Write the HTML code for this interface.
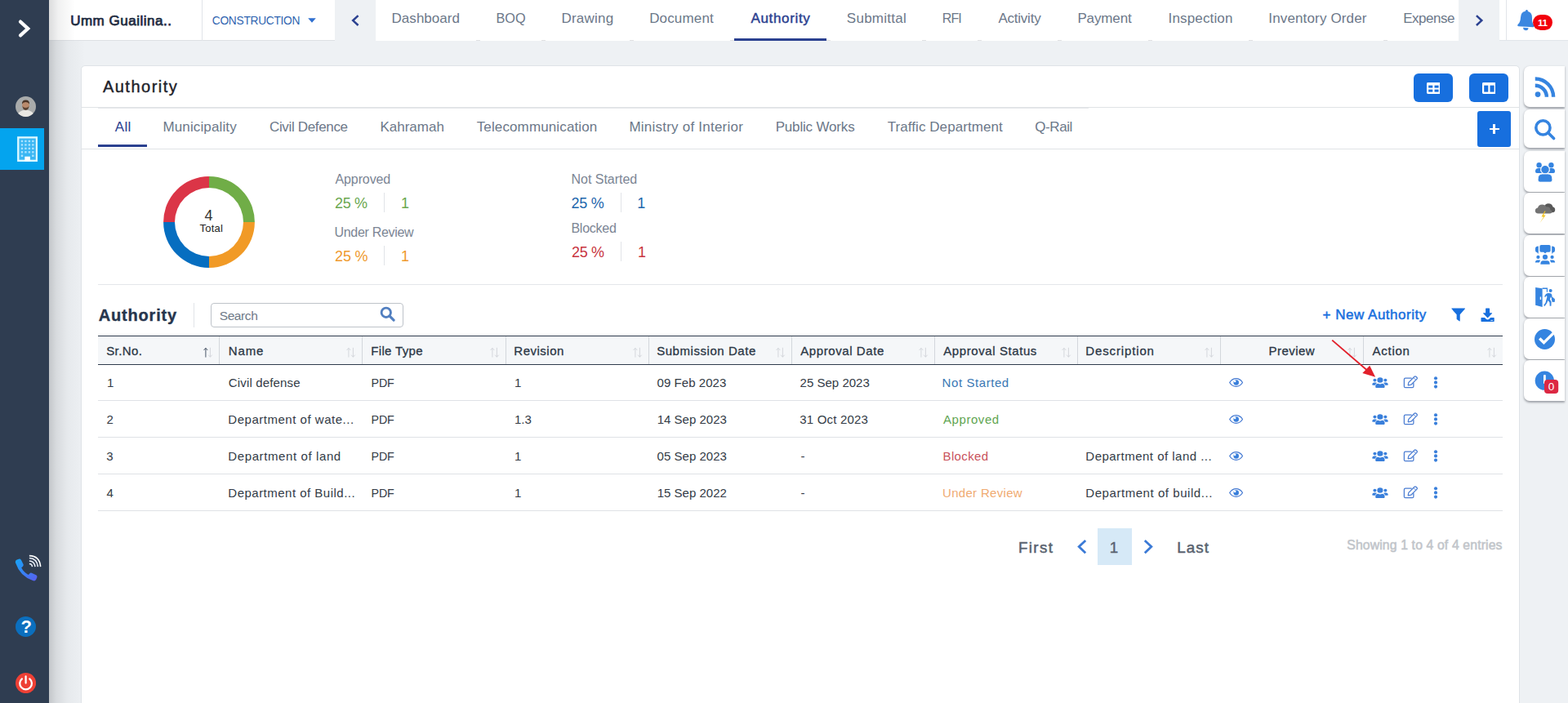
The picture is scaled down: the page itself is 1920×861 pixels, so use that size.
<!DOCTYPE html>
<html lang="en">
<head>
<meta charset="utf-8">
<title>Authority</title>
<style>
*{box-sizing:border-box;margin:0;padding:0}
html,body{width:1920px;height:861px;overflow:hidden}
body{background:#eef1f4;font-family:"Liberation Sans",sans-serif;color:#2b3443;position:relative}
.t{position:absolute;white-space:nowrap}
.a,svg{position:absolute}
.box{position:absolute}
</style>
</head>
<body>
<div class="box" style="left:60px;top:0px;width:44px;height:861px;background:linear-gradient(to right,rgba(40,45,50,.22),rgba(50,55,60,.12) 20%,rgba(60,65,70,.045) 52%,rgba(70,75,80,0) 100%);"></div>
<div id="topbar">
<div class="box" style="left:60px;top:0px;width:350px;height:50px;background:#fff;border-bottom:1px solid #dde0e4;"></div>
<div class="box" style="left:60px;top:0px;width:32px;height:50px;background:linear-gradient(to right,rgba(40,45,50,.17),rgba(50,55,60,.07) 35%,rgba(70,75,80,0) 100%);"></div>
<div class="box" style="left:247px;top:0px;width:1px;height:50px;background:#e1e4e9;"></div>
<div class="t" style="left:86.13px;top:15.00px;font-size:17px;line-height:22px;color:#1f2d42;letter-spacing:0.508px;-webkit-text-stroke:0.75px #1f2d42;">Umm Guailina..</div>
<div class="t" style="left:259.84px;top:17.00px;font-size:13.75px;line-height:18px;color:#2f64b0;letter-spacing:-0.290px;">CONSTRUCTION</div>
<svg style="left:376px;top:21px" width="12" height="8" viewBox="0 0 12 8"><path d="M1.2 1.2 H10.8 L6 6.8Z" fill="#2f6fd0"/></svg>
<svg style="left:428px;top:16px" width="14" height="18" viewBox="0 0 14 18"><path d="M10.6 3.2 L4.2 9.1 L10.6 15" fill="none" stroke="#2b4190" stroke-width="2.5"/></svg>
<div class="box" style="left:460px;top:0px;width:1326px;height:50px;background:#fff;"></div>
<div id="nav">
<div class="t" style="left:479.57px;top:12.00px;font-size:17px;line-height:22px;color:#6c7889;letter-spacing:0.028px;">Dashboard</div>
<div class="t" style="left:607.52px;top:12.00px;font-size:16.25px;line-height:21px;color:#6c7889;">BOQ</div>
<div class="t" style="left:687.38px;top:12.00px;font-size:17px;line-height:22px;color:#6c7889;letter-spacing:0.230px;">Drawing</div>
<div class="t" style="left:795.13px;top:12.00px;font-size:17px;line-height:22px;color:#6c7889;letter-spacing:0.159px;">Document</div>
<div class="t" style="left:919.48px;top:12.00px;font-size:17px;line-height:22px;color:#2b4190;letter-spacing:0.652px;-webkit-text-stroke:0.45px #2b4190;">Authority</div>
<div class="t" style="left:1036.82px;top:12.00px;font-size:17px;line-height:22px;color:#6c7889;letter-spacing:0.261px;">Submittal</div>
<div class="t" style="left:1153.83px;top:12.00px;font-size:16.0px;line-height:21px;color:#6c7889;letter-spacing:-0.975px;">RFI</div>
<div class="t" style="left:1222.39px;top:12.00px;font-size:17px;line-height:22px;color:#6c7889;letter-spacing:-0.220px;">Activity</div>
<div class="t" style="left:1319.38px;top:12.00px;font-size:17px;line-height:22px;color:#6c7889;letter-spacing:-0.124px;">Payment</div>
<div class="t" style="left:1430.58px;top:12.00px;font-size:17px;line-height:22px;color:#6c7889;letter-spacing:0.145px;">Inspection</div>
<div class="t" style="left:1553.26px;top:12.00px;font-size:17px;line-height:22px;color:#6c7889;letter-spacing:0.152px;">Inventory Order</div>
<div class="t" style="left:1718.22px;top:12.00px;font-size:17px;line-height:22px;color:#6c7889;letter-spacing:-0.470px;">Expense</div>
</div>
<div class="box" style="left:583px;top:49px;width:5px;height:1px;background:#e0e1e3;"></div>
<div class="box" style="left:663px;top:49px;width:5px;height:1px;background:#e0e1e3;"></div>
<div class="box" style="left:771px;top:49px;width:5px;height:1px;background:#e0e1e3;"></div>
<div class="box" style="left:894px;top:49px;width:5px;height:1px;background:#e0e1e3;"></div>
<div class="box" style="left:1012px;top:49px;width:5px;height:1px;background:#e0e1e3;"></div>
<div class="box" style="left:1129px;top:49px;width:5px;height:1px;background:#e0e1e3;"></div>
<div class="box" style="left:1197px;top:49px;width:5px;height:1px;background:#e0e1e3;"></div>
<div class="box" style="left:1295px;top:49px;width:5px;height:1px;background:#e0e1e3;"></div>
<div class="box" style="left:1406px;top:49px;width:5px;height:1px;background:#e0e1e3;"></div>
<div class="box" style="left:1529px;top:49px;width:5px;height:1px;background:#e0e1e3;"></div>
<div class="box" style="left:1694px;top:49px;width:5px;height:1px;background:#e0e1e3;"></div>
<div class="box" style="left:899px;top:47px;width:113px;height:3px;background:#2b4190;"></div>
<svg style="left:1804px;top:16px" width="14" height="18" viewBox="0 0 14 18"><path d="M3.9 3.2 L10.3 9.1 L3.9 15" fill="none" stroke="#2b4190" stroke-width="2.5"/></svg>
<div class="box" style="left:1836px;top:0px;width:84px;height:50px;background:#fff;border-bottom:1px solid #e1e5ea;"></div>
<div class="box" style="left:1844px;top:0px;width:1px;height:49px;background:#e1e4e9;"></div>
<svg style="left:1857px;top:11.4px" width="22.6" height="27" viewBox="0 0 22 27"><g transform="rotate(3 11 24)"><path d="M11 1 Q12.6 1 12.6 2.8 Q18 4 18 10.5 Q18 16.5 20.6 19 Q21.6 20 21.2 21 Q20.9 21.8 19.8 21.8 H2.2 Q1.1 21.8 0.8 21 Q0.4 20 1.4 19 Q4 16.5 4 10.5 Q4 4 9.4 2.8 Q9.4 1 11 1Z" fill="#3b87e0"/><path d="M7.8 23 H14.2 Q14.2 26.2 11 26.2 Q7.8 26.2 7.8 23Z" fill="#3b87e0"/></g></svg>
<div class="box" style="left:1877.3px;top:18px;width:24px;height:19px;border-radius:9.5px;background:#f2000c"></div>
<div class="t" style="left:1883.00px;top:20.00px;font-size:11.75px;line-height:15px;color:#fff;font-weight:700;letter-spacing:-0.486px;">11</div>
</div>
<div id="side">
<div class="box" style="left:0px;top:0px;width:60px;height:861px;background:#2f3d51;"></div>
<svg style="left:20px;top:22px" width="20" height="26" viewBox="0 0 20 26"><path d="M5 4.6 L14.2 13 L5 21.4" fill="none" stroke="#fff" stroke-width="4.2" stroke-linecap="round" stroke-linejoin="miter"/></svg>
<svg style="left:19px;top:117.5px" width="25" height="25" viewBox="0 0 26 26"><defs><clipPath id="avc"><circle cx="13" cy="13" r="13"/></clipPath></defs><circle cx="13" cy="13" r="13" fill="#a9abab"/><g clip-path="url(#avc)"><ellipse cx="13" cy="25.5" rx="11" ry="8" fill="#e9e7e3"/><ellipse cx="13" cy="11.5" rx="4.6" ry="5.6" fill="#b98a6c"/><path d="M8.2 10 Q8 4.6 13 4.6 Q18 4.6 17.8 10 Q16.5 7.4 13 7.4 Q9.5 7.4 8.2 10Z" fill="#4a3426"/><path d="M8.8 12.5 Q9.5 17.5 13 17.6 Q16.5 17.5 17.2 12.5 Q16 14.6 13 14.6 Q10 14.6 8.8 12.5Z" fill="#5a4232"/></g></svg>
<div class="box" style="left:0;top:157px;width:54px;height:51px;background:#04a4ee"></div>
<svg style="left:20.8px;top:166.8px" width="25.2" height="31.2" viewBox="0 0 26 32"><rect x="1.3" y="1.3" width="23.4" height="29.4" fill="#3ab6f3" stroke="#dcf8ff" stroke-width="2.4"/><g fill="#a8e2ff"><rect x="4.9" y="4.8" width="2.5" height="2.5"/><rect x="9.5" y="4.8" width="2.5" height="2.5"/><rect x="14.1" y="4.8" width="2.5" height="2.5"/><rect x="18.7" y="4.8" width="2.5" height="2.5"/><rect x="4.9" y="9.4" width="2.5" height="2.5"/><rect x="9.5" y="9.4" width="2.5" height="2.5"/><rect x="14.1" y="9.4" width="2.5" height="2.5"/><rect x="18.7" y="9.4" width="2.5" height="2.5"/><rect x="4.9" y="14" width="2.5" height="2.5"/><rect x="9.5" y="14" width="2.5" height="2.5"/><rect x="14.1" y="14" width="2.5" height="2.5"/><rect x="18.7" y="14" width="2.5" height="2.5"/><rect x="4.9" y="18.6" width="2.5" height="2.5"/><rect x="9.5" y="18.6" width="2.5" height="2.5"/><rect x="14.1" y="18.6" width="2.5" height="2.5"/><rect x="18.7" y="18.6" width="2.5" height="2.5"/><rect x="4.9" y="23.2" width="2.5" height="2.5"/><rect x="18.7" y="23.2" width="2.5" height="2.5"/></g><rect x="9.6" y="25.4" width="6.8" height="6" fill="#fff"/></svg>
<svg style="left:18px;top:679px" width="33" height="33" viewBox="0 0 36 36"><defs><linearGradient id="phg" x1="0" y1="0" x2="1" y2="1"><stop offset="0" stop-color="#16a6f8"/><stop offset="1" stop-color="#5a5df0"/></linearGradient></defs><path transform="translate(-2.47,-1.85) scale(1.19)" d="M3.2 11.5 Q2 8.8 4.6 7.6 L6.6 6.8 Q8.4 6.2 9.4 8 L11.6 12.4 Q12.4 14 11 15.2 L9.6 16.4 Q12 21.4 17.4 24.4 L18.8 23 Q20 21.8 21.6 22.6 L26 24.8 Q27.8 25.8 27 27.6 L26.2 29.6 Q25 32 22.4 31 Q8 26 3.2 11.5Z" fill="url(#phg)"/><g fill="none" stroke="#e8edf5" stroke-width="1.7"><path d="M19.5 12.5 Q23 12.5 23.5 16.5"/><path d="M19.5 8.7 Q26.3 9 27.3 16.5"/><path d="M19.5 5 Q29.8 5.4 31 16.5"/><path d="M19.5 1.8 Q33.4 2 34.5 16.5" stroke="#fff"/></g></svg>
<div class="box" style="left:18.9px;top:754.6px;width:25.2px;height:25.2px;border-radius:50%;background:#0b6fbe"></div>
<svg style="left:18.9px;top:823.8px" width="25.2" height="25.2" viewBox="0 0 26 26"><circle cx="13" cy="13" r="13" fill="#ee4035"/><path d="M8.2 7.6 A7.6 7.6 0 1 0 17.8 7.6" fill="none" stroke="#fff" stroke-width="2.3" stroke-linecap="round"/><path d="M13 4.6 V13" stroke="#fff" stroke-width="2.3" stroke-linecap="round"/></svg>
<div class="t" style="left:25.60px;top:753.00px;font-size:22px;line-height:29px;color:#fff;font-weight:700;">?</div>
</div>
<div id="card">
<div class="box" style="left:99px;top:80px;width:1762px;height:790px;background:#fff;border:1px solid #dfe3e7;border-radius:5px;"></div>
<div class="t" style="left:125.88px;top:93.00px;font-size:20px;line-height:26px;color:#1d2129;letter-spacing:1.499px;-webkit-text-stroke:0.4px #1d2129;">Authority</div>
<div class="box" style="left:1731px;top:90px;width:48px;height:35px;background:#176fde;border-radius:6px;"></div>
<div class="box" style="left:1799px;top:90px;width:48px;height:35px;background:#176fde;border-radius:6px;"></div>
<svg style="left:1746.7px;top:101px" width="16.8" height="14" viewBox="0 0 16.8 14"><rect width="16.8" height="14" rx="1.4" fill="#fff"/><rect x="2.2" y="3.6" width="5.1" height="3" fill="#176fde"/><rect x="9.5" y="3.6" width="5.1" height="3" fill="#176fde"/><rect x="2.2" y="8.6" width="5.1" height="3" fill="#176fde"/><rect x="9.5" y="8.6" width="5.1" height="3" fill="#176fde"/></svg>
<svg style="left:1814.6px;top:101px" width="16.8" height="14" viewBox="0 0 16.8 14"><rect width="16.8" height="14" rx="1.4" fill="#fff"/><rect x="2.2" y="3.6" width="5.1" height="8" fill="#176fde"/><rect x="9.5" y="3.6" width="5.1" height="8" fill="#176fde"/></svg>
<div class="box" style="left:100px;top:131px;width:1760px;height:1px;background:#e0e3e6;"></div>
<div class="box" style="left:120px;top:132px;width:1213px;height:1px;background:#e6e8eb;"></div>
<div id="tabs">
<div class="t" style="left:140.64px;top:145.00px;font-size:17px;line-height:22px;color:#2b4190;letter-spacing:0.439px;">All</div>
<div class="t" style="left:199.47px;top:145.00px;font-size:17px;line-height:22px;color:#6c7889;letter-spacing:0.128px;">Municipality</div>
<div class="t" style="left:330.01px;top:145.00px;font-size:17px;line-height:22px;color:#6c7889;letter-spacing:-0.342px;">Civil Defence</div>
<div class="t" style="left:465.47px;top:145.00px;font-size:17px;line-height:22px;color:#6c7889;letter-spacing:-0.007px;">Kahramah</div>
<div class="t" style="left:583.70px;top:145.00px;font-size:17px;line-height:22px;color:#6c7889;letter-spacing:0.131px;">Telecommunication</div>
<div class="t" style="left:770.47px;top:145.00px;font-size:17px;line-height:22px;color:#6c7889;letter-spacing:0.225px;">Ministry of Interior</div>
<div class="t" style="left:949.67px;top:145.00px;font-size:17px;line-height:22px;color:#6c7889;letter-spacing:-0.172px;">Public Works</div>
<div class="t" style="left:1086.71px;top:145.00px;font-size:17px;line-height:22px;color:#6c7889;letter-spacing:0.070px;">Traffic Department</div>
<div class="t" style="left:1267.34px;top:145.00px;font-size:17px;line-height:22px;color:#6c7889;letter-spacing:-0.443px;">Q-Rail</div>
</div>
<div class="box" style="left:120px;top:177px;width:60px;height:3px;background:#2b4190;"></div>
<div class="box" style="left:100px;top:182px;width:1760px;height:1px;background:#e0e3e6;"></div>
<div class="box" style="left:1809px;top:136px;width:41px;height:44px;background:#176fde;border-radius:3px;"></div>
<div class="box" style="left:1823.5px;top:157px;width:12px;height:2.4px;background:#fff;"></div>
<div class="box" style="left:1828.3px;top:152.2px;width:2.4px;height:12px;background:#fff;"></div>
<svg style="left:197.7px;top:213.5px" width="116" height="116" viewBox="-58 -58 116 116"><path d="M0,-55.9 A55.9,55.9 0 0 1 55.9,0 L42,0 A42,42 0 0 0 0,-42 Z" fill="#70ad47"/><path d="M55.9,0 A55.9,55.9 0 0 1 0,55.9 L0,42 A42,42 0 0 0 42,0 Z" fill="#f19a26"/><path d="M0,55.9 A55.9,55.9 0 0 1 -55.9,0 L-42,0 A42,42 0 0 0 0,42 Z" fill="#066ec0"/><path d="M-55.9,0 A55.9,55.9 0 0 1 0,-55.9 L0,-42 A42,42 0 0 0 -42,0 Z" fill="#db3547"/></svg>
<div class="t" style="left:250.49px;top:253.00px;font-size:18px;line-height:23px;color:#333;">4</div>
<div class="t" style="left:244.53px;top:271.00px;font-size:13px;line-height:17px;color:#222;letter-spacing:0.197px;">Total</div>
<div id="stats">
<div class="t" style="left:410.47px;top:209.00px;font-size:16px;line-height:21px;color:#7b8594;letter-spacing:-0.100px;">Approved</div>
<div class="t" style="left:410.07px;top:238.00px;font-size:18px;line-height:23px;color:#6aa84f;letter-spacing:-0.393px;">25 %</div>
<div class="box" style="left:470px;top:236px;width:1px;height:24px;background:#e1e4e8;"></div>
<div class="t" style="left:491.00px;top:238.00px;font-size:18px;line-height:23px;color:#6aa84f;">1</div>
<div class="t" style="left:409.44px;top:274.00px;font-size:16px;line-height:21px;color:#7b8594;letter-spacing:-0.296px;">Under Review</div>
<div class="t" style="left:410.08px;top:303.00px;font-size:18px;line-height:23px;color:#ef9a2e;letter-spacing:-0.209px;">25 %</div>
<div class="box" style="left:470px;top:301px;width:1px;height:24px;background:#e1e4e8;"></div>
<div class="t" style="left:491.00px;top:303.00px;font-size:18px;line-height:23px;color:#ef9a2e;">1</div>
<div class="t" style="left:699.47px;top:209.00px;font-size:16px;line-height:21px;color:#7b8594;letter-spacing:-0.015px;">Not Started</div>
<div class="t" style="left:699.39px;top:238.00px;font-size:18px;line-height:23px;color:#1e66ad;letter-spacing:-0.227px;">25 %</div>
<div class="box" style="left:760px;top:236px;width:1px;height:24px;background:#e1e4e8;"></div>
<div class="t" style="left:780.33px;top:238.00px;font-size:18px;line-height:23px;color:#1e66ad;">1</div>
<div class="t" style="left:699.47px;top:269.00px;font-size:16px;line-height:21px;color:#7b8594;letter-spacing:-0.268px;">Blocked</div>
<div class="t" style="left:699.91px;top:298.00px;font-size:18px;line-height:23px;color:#c8343e;letter-spacing:-0.283px;">25 %</div>
<div class="box" style="left:760px;top:296px;width:1px;height:24px;background:#e1e4e8;"></div>
<div class="t" style="left:781.00px;top:298.00px;font-size:18px;line-height:23px;color:#c8343e;">1</div>
</div>
<div class="box" style="left:120px;top:348px;width:1720px;height:1px;background:#e4e7ea;"></div>
<div class="t" style="left:120.66px;top:372.50px;font-size:20px;line-height:26px;color:#26354d;font-weight:700;letter-spacing:0.822px;-webkit-text-stroke:0.35px #26354d;">Authority</div>
<div class="box" style="left:237px;top:371px;width:1px;height:30px;background:#e1e4e8;"></div>
<div class="box" style="left:258px;top:371px;width:236px;height:30px;background:#fff;border:1px solid #bec3c9;border-radius:4px;"></div>
<div class="t" style="left:268.73px;top:377.30px;font-size:15.5px;line-height:20px;color:#6f7a88;letter-spacing:-0.415px;">Search</div>
<svg style="left:464.8px;top:375.2px" width="19" height="19" viewBox="0 0 20 20"><circle cx="8.2" cy="8.2" r="6" fill="none" stroke="#527fc0" stroke-width="3"/><path d="M12.8 12.8 L18 18" stroke="#527fc0" stroke-width="3.3" stroke-linecap="round"/></svg>
<svg style="left:1776.8px;top:377.4px" width="17.4" height="17.4" viewBox="0 0 17 17"><path d="M0.8 0.5 H16.2 Q17 0.5 16.5 1.3 L10.5 8 V15.5 Q10.5 16.6 9.6 16 L6.9 14 Q6.5 13.7 6.5 13.2 V8 L0.5 1.3 Q0 0.5 0.8 0.5Z" fill="#176fde"/></svg>
<svg style="left:1813.2px;top:377.4px" width="17.2" height="17.4" viewBox="0 0 18 18"><path d="M7 0.5 H11 Q11.6 0.5 11.6 1.1 V6.5 H14.3 Q15.3 6.5 14.6 7.3 L9.5 12.4 Q9 12.9 8.5 12.4 L3.4 7.3 Q2.7 6.5 3.7 6.5 H6.4 V1.1 Q6.4 0.5 7 0.5Z" fill="#176fde"/><path d="M0.5 13 Q0.5 12.4 1.1 12.4 H5.2 L7.2 14.3 Q9 15.8 10.8 14.3 L12.8 12.4 H16.9 Q17.5 12.4 17.5 13 V17 Q17.5 17.6 16.9 17.6 H1.1 Q0.5 17.6 0.5 17Z M13 15.6 H15.6 V16.4 H13Z" fill="#176fde" fill-rule="evenodd"/></svg>
<div class="t" style="left:1619.62px;top:375.00px;font-size:17px;line-height:22px;color:#176fde;letter-spacing:0.500px;-webkit-text-stroke:0.5px #176fde;">+ New Authority</div>
<div id="table">
<div class="box" style="left:120px;top:411px;width:1720px;height:36px;background:#f5f7f9;border-top:1px solid #2f3b4c;border-bottom:1px solid #2f3b4c;"></div>
<div class="t" style="left:130.16px;top:420.00px;font-size:15px;line-height:20px;color:#2c3746;letter-spacing:0.423px;-webkit-text-stroke:0.3px #2c3746;">Sr.No.</div>
<div class="box" style="left:268px;top:412px;width:1px;height:34px;background:#d3d7dc;"></div>
<svg style="left:247.6px;top:425px" width="14" height="14" viewBox="0 0 14 14"><path d="M3.9 12.6 V1.4 M1.6 3.9 L3.9 1.3 L6.2 3.9" fill="none" stroke="#3d4b5e" stroke-width=".95"/><path d="M9.4 0.8 V12.2 M7.1 9.7 L9.4 12.3 L11.7 9.7" fill="none" stroke="#d2d5da" stroke-width=".95"/></svg>
<div class="t" style="left:279.64px;top:420.00px;font-size:15px;line-height:20px;color:#2c3746;letter-spacing:0.923px;-webkit-text-stroke:0.3px #2c3746;">Name</div>
<div class="box" style="left:443px;top:412px;width:1px;height:34px;background:#d3d7dc;"></div>
<svg style="left:422.6px;top:425px" width="14" height="14" viewBox="0 0 14 14"><path d="M3.9 12.6 V1.4 M1.6 3.9 L3.9 1.3 L6.2 3.9" fill="none" stroke="#d2d5da" stroke-width=".95"/><path d="M9.4 0.8 V12.2 M7.1 9.7 L9.4 12.3 L11.7 9.7" fill="none" stroke="#d2d5da" stroke-width=".95"/></svg>
<div class="t" style="left:454.31px;top:420.00px;font-size:15px;line-height:20px;color:#2c3746;letter-spacing:0.329px;-webkit-text-stroke:0.3px #2c3746;">File Type</div>
<div class="box" style="left:619px;top:412px;width:1px;height:34px;background:#d3d7dc;"></div>
<svg style="left:598.6px;top:425px" width="14" height="14" viewBox="0 0 14 14"><path d="M3.9 12.6 V1.4 M1.6 3.9 L3.9 1.3 L6.2 3.9" fill="none" stroke="#d2d5da" stroke-width=".95"/><path d="M9.4 0.8 V12.2 M7.1 9.7 L9.4 12.3 L11.7 9.7" fill="none" stroke="#d2d5da" stroke-width=".95"/></svg>
<div class="t" style="left:629.31px;top:420.00px;font-size:15px;line-height:20px;color:#2c3746;letter-spacing:0.504px;-webkit-text-stroke:0.3px #2c3746;">Revision</div>
<div class="box" style="left:794px;top:412px;width:1px;height:34px;background:#d3d7dc;"></div>
<svg style="left:773.6px;top:425px" width="14" height="14" viewBox="0 0 14 14"><path d="M3.9 12.6 V1.4 M1.6 3.9 L3.9 1.3 L6.2 3.9" fill="none" stroke="#d2d5da" stroke-width=".95"/><path d="M9.4 0.8 V12.2 M7.1 9.7 L9.4 12.3 L11.7 9.7" fill="none" stroke="#d2d5da" stroke-width=".95"/></svg>
<div class="t" style="left:804.16px;top:420.00px;font-size:15px;line-height:20px;color:#2c3746;letter-spacing:0.552px;-webkit-text-stroke:0.3px #2c3746;">Submission Date</div>
<div class="box" style="left:969px;top:412px;width:1px;height:34px;background:#d3d7dc;"></div>
<svg style="left:948.6px;top:425px" width="14" height="14" viewBox="0 0 14 14"><path d="M3.9 12.6 V1.4 M1.6 3.9 L3.9 1.3 L6.2 3.9" fill="none" stroke="#d2d5da" stroke-width=".95"/><path d="M9.4 0.8 V12.2 M7.1 9.7 L9.4 12.3 L11.7 9.7" fill="none" stroke="#d2d5da" stroke-width=".95"/></svg>
<div class="t" style="left:980.24px;top:420.00px;font-size:15px;line-height:20px;color:#2c3746;letter-spacing:0.582px;-webkit-text-stroke:0.3px #2c3746;">Approval Date</div>
<div class="box" style="left:1144px;top:412px;width:1px;height:34px;background:#d3d7dc;"></div>
<svg style="left:1123.6px;top:425px" width="14" height="14" viewBox="0 0 14 14"><path d="M3.9 12.6 V1.4 M1.6 3.9 L3.9 1.3 L6.2 3.9" fill="none" stroke="#d2d5da" stroke-width=".95"/><path d="M9.4 0.8 V12.2 M7.1 9.7 L9.4 12.3 L11.7 9.7" fill="none" stroke="#d2d5da" stroke-width=".95"/></svg>
<div class="t" style="left:1155.24px;top:420.00px;font-size:15px;line-height:20px;color:#2c3746;letter-spacing:0.587px;-webkit-text-stroke:0.3px #2c3746;">Approval Status</div>
<div class="box" style="left:1319px;top:412px;width:1px;height:34px;background:#d3d7dc;"></div>
<svg style="left:1298.6px;top:425px" width="14" height="14" viewBox="0 0 14 14"><path d="M3.9 12.6 V1.4 M1.6 3.9 L3.9 1.3 L6.2 3.9" fill="none" stroke="#d2d5da" stroke-width=".95"/><path d="M9.4 0.8 V12.2 M7.1 9.7 L9.4 12.3 L11.7 9.7" fill="none" stroke="#d2d5da" stroke-width=".95"/></svg>
<div class="t" style="left:1329.31px;top:420.00px;font-size:15px;line-height:20px;color:#2c3746;letter-spacing:0.863px;-webkit-text-stroke:0.3px #2c3746;">Description</div>
<div class="box" style="left:1494px;top:412px;width:1px;height:34px;background:#d3d7dc;"></div>
<svg style="left:1473.6px;top:425px" width="14" height="14" viewBox="0 0 14 14"><path d="M3.9 12.6 V1.4 M1.6 3.9 L3.9 1.3 L6.2 3.9" fill="none" stroke="#d2d5da" stroke-width=".95"/><path d="M9.4 0.8 V12.2 M7.1 9.7 L9.4 12.3 L11.7 9.7" fill="none" stroke="#d2d5da" stroke-width=".95"/></svg>
<div class="t" style="left:1553.62px;top:420.00px;font-size:15px;line-height:20px;color:#2c3746;letter-spacing:0.447px;-webkit-text-stroke:0.3px #2c3746;">Preview</div>
<div class="box" style="left:1669px;top:412px;width:1px;height:34px;background:#d3d7dc;"></div>
<svg style="left:1648.6px;top:425px" width="14" height="14" viewBox="0 0 14 14"><path d="M3.9 12.6 V1.4 M1.6 3.9 L3.9 1.3 L6.2 3.9" fill="none" stroke="#d2d5da" stroke-width=".95"/><path d="M9.4 0.8 V12.2 M7.1 9.7 L9.4 12.3 L11.7 9.7" fill="none" stroke="#d2d5da" stroke-width=".95"/></svg>
<div class="t" style="left:1680.60px;top:420.00px;font-size:15px;line-height:20px;color:#2c3746;letter-spacing:0.736px;-webkit-text-stroke:0.3px #2c3746;">Action</div>
<svg style="left:1819.6px;top:425px" width="14" height="14" viewBox="0 0 14 14"><path d="M3.9 12.6 V1.4 M1.6 3.9 L3.9 1.3 L6.2 3.9" fill="none" stroke="#d2d5da" stroke-width=".95"/><path d="M9.4 0.8 V12.2 M7.1 9.7 L9.4 12.3 L11.7 9.7" fill="none" stroke="#d2d5da" stroke-width=".95"/></svg>
<div class="row">
<div class="t" style="left:130.92px;top:459.00px;font-size:15px;line-height:20px;color:#333b46;">1</div>
<div class="t" style="left:279.84px;top:459.00px;font-size:15px;line-height:20px;color:#333b46;letter-spacing:0.160px;">Civil defense</div>
<div class="t" style="left:454.46px;top:460.00px;font-size:14.25px;line-height:19px;color:#333b46;letter-spacing:-0.065px;">PDF</div>
<div class="t" style="left:629.92px;top:459.00px;font-size:15px;line-height:20px;color:#333b46;">1</div>
<div class="t" style="left:804.58px;top:459.00px;font-size:15px;line-height:20px;color:#333b46;letter-spacing:0.053px;">09 Feb 2023</div>
<div class="t" style="left:979.58px;top:459.00px;font-size:15px;line-height:20px;color:#333b46;letter-spacing:0.015px;">25 Sep 2023</div>
<div class="t" style="left:1153.58px;top:459.00px;font-size:15px;line-height:20px;color:#3a78b5;letter-spacing:0.576px;">Not Started</div>
<svg style="left:1504.8px;top:462.7px" width="17.2" height="11" viewBox="0 0 17.2 11"><path d="M0.7 5.5 C3 1.7 5.8 0.65 8.6 0.65 C11.4 0.65 14.2 1.7 16.5 5.5 C14.2 9.3 11.4 10.35 8.6 10.35 C5.8 10.35 3 9.3 0.7 5.5Z" fill="#fff" stroke="#4479d2" stroke-width="1.25"/><circle cx="8.7" cy="5.5" r="3.25" fill="#397fdb"/><circle cx="7.2" cy="4" r="1.25" fill="#fff"/></svg><svg style="left:1679.5px;top:461.7px" width="20" height="13.4" viewBox="0 0 21 15" preserveAspectRatio="none"><circle cx="3.6" cy="4" r="2.1" fill="#397fdb"/><circle cx="17.2" cy="4" r="2.1" fill="#397fdb"/><circle cx="10.4" cy="3.9" r="3.7" fill="#397fdb"/><path d="M0.3 10 Q0.3 7.2 3 7.2 H4.6 Q5.8 7.2 6.4 7.8 Q4.6 8.8 4.2 10.8 H1 Q0.3 10.8 0.3 10Z" fill="#397fdb"/><path d="M20.7 10 Q20.7 7.2 18 7.2 H16.4 Q15.2 7.2 14.6 7.8 Q16.4 8.8 16.8 10.8 H20 Q20.7 10.8 20.7 10Z" fill="#397fdb"/><path d="M4.4 13 Q4.4 8.8 8 8.8 Q10.4 10 12.8 8.8 Q16.4 8.8 16.4 13 Q16.4 14.8 14.9 14.8 H5.9 Q4.4 14.8 4.4 13Z" fill="#397fdb"/></svg><svg style="left:1718px;top:460.2px" width="18.4" height="16" viewBox="0 0 19 17"><path d="M10.6 3.4 H2.8 Q1.2 3.4 1.2 5 V14 Q1.2 15.6 2.8 15.6 H11.8 Q13.4 15.6 13.4 14 V10" fill="none" stroke="#4b7dd2" stroke-width="1.35" stroke-linecap="round"/><path d="M14.6 1.3 Q15.6 0.4 16.6 1.3 L17.7 2.4 Q18.6 3.4 17.7 4.4 L10.2 11.9 L6.9 12.5 Q6.3 12.6 6.4 12 L7 8.9Z" fill="none" stroke="#4b7dd2" stroke-width="1.35" stroke-linejoin="round"/><path d="M13.4 2.6 L16.4 5.6" stroke="#4b7dd2" stroke-width="1"/></svg><svg style="left:1755.2px;top:461.0px" width="6" height="14.8" viewBox="0 0 6 14.8"><circle cx="3" cy="2.2" r="2.05" fill="#397fdb"/><circle cx="3" cy="7.4" r="2.05" fill="#397fdb"/><circle cx="3" cy="12.6" r="2.05" fill="#397fdb"/></svg>
</div>
<div class="box" style="left:120px;top:490px;width:1720px;height:1px;background:#dfe2e6;"></div>
<div class="row">
<div class="t" style="left:130.58px;top:504.00px;font-size:15px;line-height:20px;color:#333b46;">2</div>
<div class="t" style="left:279.32px;top:504.00px;font-size:15px;line-height:20px;color:#333b46;letter-spacing:0.523px;">Department of wate...</div>
<div class="t" style="left:454.46px;top:505.00px;font-size:14.25px;line-height:19px;color:#333b46;letter-spacing:-0.065px;">PDF</div>
<div class="t" style="left:629.92px;top:504.00px;font-size:15px;line-height:20px;color:#333b46;letter-spacing:0.014px;">1.3</div>
<div class="t" style="left:804.67px;top:504.00px;font-size:15px;line-height:20px;color:#333b46;letter-spacing:0.020px;">14 Sep 2023</div>
<div class="t" style="left:979.34px;top:504.00px;font-size:15px;line-height:20px;color:#333b46;letter-spacing:0.189px;">31 Oct 2023</div>
<div class="t" style="left:1155.00px;top:504.00px;font-size:15px;line-height:20px;color:#5fa552;letter-spacing:0.566px;">Approved</div>
<svg style="left:1504.8px;top:507.7px" width="17.2" height="11" viewBox="0 0 17.2 11"><path d="M0.7 5.5 C3 1.7 5.8 0.65 8.6 0.65 C11.4 0.65 14.2 1.7 16.5 5.5 C14.2 9.3 11.4 10.35 8.6 10.35 C5.8 10.35 3 9.3 0.7 5.5Z" fill="#fff" stroke="#4479d2" stroke-width="1.25"/><circle cx="8.7" cy="5.5" r="3.25" fill="#397fdb"/><circle cx="7.2" cy="4" r="1.25" fill="#fff"/></svg><svg style="left:1679.5px;top:506.7px" width="20" height="13.4" viewBox="0 0 21 15" preserveAspectRatio="none"><circle cx="3.6" cy="4" r="2.1" fill="#397fdb"/><circle cx="17.2" cy="4" r="2.1" fill="#397fdb"/><circle cx="10.4" cy="3.9" r="3.7" fill="#397fdb"/><path d="M0.3 10 Q0.3 7.2 3 7.2 H4.6 Q5.8 7.2 6.4 7.8 Q4.6 8.8 4.2 10.8 H1 Q0.3 10.8 0.3 10Z" fill="#397fdb"/><path d="M20.7 10 Q20.7 7.2 18 7.2 H16.4 Q15.2 7.2 14.6 7.8 Q16.4 8.8 16.8 10.8 H20 Q20.7 10.8 20.7 10Z" fill="#397fdb"/><path d="M4.4 13 Q4.4 8.8 8 8.8 Q10.4 10 12.8 8.8 Q16.4 8.8 16.4 13 Q16.4 14.8 14.9 14.8 H5.9 Q4.4 14.8 4.4 13Z" fill="#397fdb"/></svg><svg style="left:1718px;top:505.2px" width="18.4" height="16" viewBox="0 0 19 17"><path d="M10.6 3.4 H2.8 Q1.2 3.4 1.2 5 V14 Q1.2 15.6 2.8 15.6 H11.8 Q13.4 15.6 13.4 14 V10" fill="none" stroke="#4b7dd2" stroke-width="1.35" stroke-linecap="round"/><path d="M14.6 1.3 Q15.6 0.4 16.6 1.3 L17.7 2.4 Q18.6 3.4 17.7 4.4 L10.2 11.9 L6.9 12.5 Q6.3 12.6 6.4 12 L7 8.9Z" fill="none" stroke="#4b7dd2" stroke-width="1.35" stroke-linejoin="round"/><path d="M13.4 2.6 L16.4 5.6" stroke="#4b7dd2" stroke-width="1"/></svg><svg style="left:1755.2px;top:506.0px" width="6" height="14.8" viewBox="0 0 6 14.8"><circle cx="3" cy="2.2" r="2.05" fill="#397fdb"/><circle cx="3" cy="7.4" r="2.05" fill="#397fdb"/><circle cx="3" cy="12.6" r="2.05" fill="#397fdb"/></svg>
</div>
<div class="box" style="left:120px;top:535px;width:1720px;height:1px;background:#dfe2e6;"></div>
<div class="row">
<div class="t" style="left:130.34px;top:549.00px;font-size:15px;line-height:20px;color:#333b46;">3</div>
<div class="t" style="left:279.32px;top:549.00px;font-size:15px;line-height:20px;color:#333b46;letter-spacing:0.607px;">Department of land</div>
<div class="t" style="left:454.46px;top:550.00px;font-size:14.25px;line-height:19px;color:#333b46;letter-spacing:-0.065px;">PDF</div>
<div class="t" style="left:629.92px;top:549.00px;font-size:15px;line-height:20px;color:#333b46;">1</div>
<div class="t" style="left:804.58px;top:549.00px;font-size:15px;line-height:20px;color:#333b46;letter-spacing:0.029px;">05 Sep 2023</div>
<div class="t" style="left:980.39px;top:549.00px;font-size:15px;line-height:20px;color:#333b46;">-</div>
<div class="t" style="left:1154.55px;top:549.00px;font-size:15px;line-height:20px;color:#c9525b;letter-spacing:0.364px;">Blocked</div>
<div class="t" style="left:1329.32px;top:549.00px;font-size:15px;line-height:20px;color:#333b46;letter-spacing:0.481px;">Department of land ...</div>
<svg style="left:1504.8px;top:552.6999999999999px" width="17.2" height="11" viewBox="0 0 17.2 11"><path d="M0.7 5.5 C3 1.7 5.8 0.65 8.6 0.65 C11.4 0.65 14.2 1.7 16.5 5.5 C14.2 9.3 11.4 10.35 8.6 10.35 C5.8 10.35 3 9.3 0.7 5.5Z" fill="#fff" stroke="#4479d2" stroke-width="1.25"/><circle cx="8.7" cy="5.5" r="3.25" fill="#397fdb"/><circle cx="7.2" cy="4" r="1.25" fill="#fff"/></svg><svg style="left:1679.5px;top:551.6999999999999px" width="20" height="13.4" viewBox="0 0 21 15" preserveAspectRatio="none"><circle cx="3.6" cy="4" r="2.1" fill="#397fdb"/><circle cx="17.2" cy="4" r="2.1" fill="#397fdb"/><circle cx="10.4" cy="3.9" r="3.7" fill="#397fdb"/><path d="M0.3 10 Q0.3 7.2 3 7.2 H4.6 Q5.8 7.2 6.4 7.8 Q4.6 8.8 4.2 10.8 H1 Q0.3 10.8 0.3 10Z" fill="#397fdb"/><path d="M20.7 10 Q20.7 7.2 18 7.2 H16.4 Q15.2 7.2 14.6 7.8 Q16.4 8.8 16.8 10.8 H20 Q20.7 10.8 20.7 10Z" fill="#397fdb"/><path d="M4.4 13 Q4.4 8.8 8 8.8 Q10.4 10 12.8 8.8 Q16.4 8.8 16.4 13 Q16.4 14.8 14.9 14.8 H5.9 Q4.4 14.8 4.4 13Z" fill="#397fdb"/></svg><svg style="left:1718px;top:550.1999999999999px" width="18.4" height="16" viewBox="0 0 19 17"><path d="M10.6 3.4 H2.8 Q1.2 3.4 1.2 5 V14 Q1.2 15.6 2.8 15.6 H11.8 Q13.4 15.6 13.4 14 V10" fill="none" stroke="#4b7dd2" stroke-width="1.35" stroke-linecap="round"/><path d="M14.6 1.3 Q15.6 0.4 16.6 1.3 L17.7 2.4 Q18.6 3.4 17.7 4.4 L10.2 11.9 L6.9 12.5 Q6.3 12.6 6.4 12 L7 8.9Z" fill="none" stroke="#4b7dd2" stroke-width="1.35" stroke-linejoin="round"/><path d="M13.4 2.6 L16.4 5.6" stroke="#4b7dd2" stroke-width="1"/></svg><svg style="left:1755.2px;top:551.0px" width="6" height="14.8" viewBox="0 0 6 14.8"><circle cx="3" cy="2.2" r="2.05" fill="#397fdb"/><circle cx="3" cy="7.4" r="2.05" fill="#397fdb"/><circle cx="3" cy="12.6" r="2.05" fill="#397fdb"/></svg>
</div>
<div class="box" style="left:120px;top:580px;width:1720px;height:1px;background:#dfe2e6;"></div>
<div class="row">
<div class="t" style="left:130.42px;top:594.00px;font-size:15px;line-height:20px;color:#333b46;">4</div>
<div class="t" style="left:279.32px;top:594.00px;font-size:15px;line-height:20px;color:#333b46;letter-spacing:0.489px;">Department of Build...</div>
<div class="t" style="left:454.46px;top:595.00px;font-size:14.25px;line-height:19px;color:#333b46;letter-spacing:-0.065px;">PDF</div>
<div class="t" style="left:629.92px;top:594.00px;font-size:15px;line-height:20px;color:#333b46;">1</div>
<div class="t" style="left:804.67px;top:594.00px;font-size:15px;line-height:20px;color:#333b46;letter-spacing:0.016px;">15 Sep 2022</div>
<div class="t" style="left:980.39px;top:594.00px;font-size:15px;line-height:20px;color:#333b46;">-</div>
<div class="t" style="left:1154.00px;top:594.00px;font-size:15px;line-height:20px;color:#f0ab72;letter-spacing:0.315px;">Under Review</div>
<div class="t" style="left:1329.32px;top:594.00px;font-size:15px;line-height:20px;color:#333b46;letter-spacing:0.553px;">Department of build...</div>
<svg style="left:1504.8px;top:597.6999999999999px" width="17.2" height="11" viewBox="0 0 17.2 11"><path d="M0.7 5.5 C3 1.7 5.8 0.65 8.6 0.65 C11.4 0.65 14.2 1.7 16.5 5.5 C14.2 9.3 11.4 10.35 8.6 10.35 C5.8 10.35 3 9.3 0.7 5.5Z" fill="#fff" stroke="#4479d2" stroke-width="1.25"/><circle cx="8.7" cy="5.5" r="3.25" fill="#397fdb"/><circle cx="7.2" cy="4" r="1.25" fill="#fff"/></svg><svg style="left:1679.5px;top:596.6999999999999px" width="20" height="13.4" viewBox="0 0 21 15" preserveAspectRatio="none"><circle cx="3.6" cy="4" r="2.1" fill="#397fdb"/><circle cx="17.2" cy="4" r="2.1" fill="#397fdb"/><circle cx="10.4" cy="3.9" r="3.7" fill="#397fdb"/><path d="M0.3 10 Q0.3 7.2 3 7.2 H4.6 Q5.8 7.2 6.4 7.8 Q4.6 8.8 4.2 10.8 H1 Q0.3 10.8 0.3 10Z" fill="#397fdb"/><path d="M20.7 10 Q20.7 7.2 18 7.2 H16.4 Q15.2 7.2 14.6 7.8 Q16.4 8.8 16.8 10.8 H20 Q20.7 10.8 20.7 10Z" fill="#397fdb"/><path d="M4.4 13 Q4.4 8.8 8 8.8 Q10.4 10 12.8 8.8 Q16.4 8.8 16.4 13 Q16.4 14.8 14.9 14.8 H5.9 Q4.4 14.8 4.4 13Z" fill="#397fdb"/></svg><svg style="left:1718px;top:595.1999999999999px" width="18.4" height="16" viewBox="0 0 19 17"><path d="M10.6 3.4 H2.8 Q1.2 3.4 1.2 5 V14 Q1.2 15.6 2.8 15.6 H11.8 Q13.4 15.6 13.4 14 V10" fill="none" stroke="#4b7dd2" stroke-width="1.35" stroke-linecap="round"/><path d="M14.6 1.3 Q15.6 0.4 16.6 1.3 L17.7 2.4 Q18.6 3.4 17.7 4.4 L10.2 11.9 L6.9 12.5 Q6.3 12.6 6.4 12 L7 8.9Z" fill="none" stroke="#4b7dd2" stroke-width="1.35" stroke-linejoin="round"/><path d="M13.4 2.6 L16.4 5.6" stroke="#4b7dd2" stroke-width="1"/></svg><svg style="left:1755.2px;top:596.0px" width="6" height="14.8" viewBox="0 0 6 14.8"><circle cx="3" cy="2.2" r="2.05" fill="#397fdb"/><circle cx="3" cy="7.4" r="2.05" fill="#397fdb"/><circle cx="3" cy="12.6" r="2.05" fill="#397fdb"/></svg>
</div>
<div class="box" style="left:120px;top:625px;width:1720px;height:1px;background:#dfe2e6;"></div>
<svg style="left:1620px;top:410px" width="80" height="60" viewBox="0 0 80 60"><path d="M11.2 6.6 L54 43.5" stroke="#e2202b" stroke-width="1.9" fill="none"/><path d="M64.1 51.7 L48.3 47 L57.2 37.8Z" fill="#e2202b"/></svg>
</div>
<div id="pager">
<div class="t" style="left:1246.94px;top:658.60px;font-size:18.75px;line-height:24px;color:#59626f;letter-spacing:1.366px;-webkit-text-stroke:0.5px #59626f;">First</div>
<svg style="left:1317px;top:659px" width="16" height="22" viewBox="0 0 16 22"><path d="M12.2 3 L4.2 10.6 L12.2 18.2" fill="none" stroke="#3b7ad6" stroke-width="2.8"/></svg>
<div class="box" style="left:1344px;top:647px;width:42px;height:45px;background:#d6e9f7;"></div>
<div class="t" style="left:1358.83px;top:658.60px;font-size:18.75px;line-height:24px;color:#59626f;-webkit-text-stroke:0.4px #59626f;">1</div>
<svg style="left:1397.5px;top:659px" width="16" height="22" viewBox="0 0 16 22"><path d="M3.8 3 L11.8 10.6 L3.8 18.2" fill="none" stroke="#3b7ad6" stroke-width="2.8"/></svg>
<div class="t" style="left:1441.26px;top:658.60px;font-size:18.75px;line-height:24px;color:#59626f;letter-spacing:1.097px;-webkit-text-stroke:0.5px #59626f;">Last</div>
<div class="t" style="left:1649.25px;top:658.00px;font-size:15.75px;line-height:20px;color:#c1c5ca;letter-spacing:0.143px;-webkit-text-stroke:0.55px #c1c5ca;">Showing 1 to 4 of 4 entries</div>
</div>
</div>
<div id="rightbar">
<div class="box" style="left:1866px;top:81px;width:50px;height:50px;background:#fff;border-radius:7px 0 0 7px;box-shadow:0 1.5px 2.5px rgba(30,35,45,.38)"><svg style="left:12.5px;top:12.5px" width="26" height="26" viewBox="0 0 27 27"><circle cx="4.2" cy="22.4" r="3.5" fill="#3584e0"/><path d="M0.8 11.2 A14.6 14.6 0 0 1 15.4 25.8" fill="none" stroke="#3584e0" stroke-width="4.6"/><path d="M0.8 2.6 A23.2 23.2 0 0 1 24 25.8" fill="none" stroke="#3584e0" stroke-width="4.6"/></svg></div>
<div class="box" style="left:1866px;top:134px;width:50px;height:47px;background:#fff;border-radius:7px 0 0 7px;box-shadow:0 1.5px 2.5px rgba(30,35,45,.38)"><svg style="left:12px;top:11px" width="28" height="28" viewBox="0 0 28 28"><circle cx="11.4" cy="11.4" r="8.6" fill="none" stroke="#3584e0" stroke-width="3.6"/><path d="M17.6 17.6 L24.6 24.6" stroke="#3584e0" stroke-width="3.6" stroke-linecap="round"/></svg></div>
<div class="box" style="left:1866px;top:185px;width:50px;height:50px;background:#fff;border-radius:7px 0 0 7px;box-shadow:0 1.5px 2.5px rgba(30,35,45,.38)"><svg style="left:12.5px;top:12.5px" width="26" height="26" viewBox="0 0 27 27"><circle cx="5.8" cy="4.4" r="3.3" fill="#3584e0"/><circle cx="21.2" cy="4.4" r="3.3" fill="#3584e0"/><path d="M1 12.4 Q1 8.4 5 8.4 H8 Q6.4 12 9.6 14.6 H3 Q1 14.6 1 12.4Z" fill="#3584e0"/><path d="M26 12.4 Q26 8.4 22 8.4 H19 Q20.6 12 17.4 14.6 H24 Q26 14.6 26 12.4Z" fill="#3584e0"/><circle cx="13.5" cy="10" r="5.4" fill="#3584e0" stroke="#fff" stroke-width="1"/><path d="M4.4 22 Q4.4 15.6 10 15.6 H17 Q22.6 15.6 22.6 22 V23.4 Q22.6 26 20 26 H7 Q4.4 26 4.4 23.4Z" fill="#3584e0" stroke="#fff" stroke-width=".8"/></svg></div>
<div class="box" style="left:1866px;top:236px;width:50px;height:50px;background:#fff;border-radius:7px 0 0 7px;box-shadow:0 1.5px 2.5px rgba(30,35,45,.38)"><svg style="left:13px;top:12px" width="26" height="26" viewBox="0 0 26 26"><path d="M12 5 Q13 1.4 17 1.2 Q21.4 1.2 22.4 5.2 Q25.4 6 25.2 9.2 Q25 12 22 12.2 H14Z" fill="#585858"/><path d="M4.6 13.6 Q0.8 13.4 0.8 10 Q0.8 7 4 6.4 Q5 2.4 9.4 2.4 Q13 2.4 14.4 5.6 Q16 4.6 17.8 5.8 Q19.6 7 19.2 9 Q21.6 9.6 21.4 11.6 Q21.2 13.6 19 13.6Z" fill="#737373"/><path d="M12.4 10.4 L8.6 17.4 H11.2 L6.6 25 L13.6 15.6 H11 L13.6 10.4Z" fill="#f3c31c"/></svg></div>
<div class="box" style="left:1866px;top:288px;width:50px;height:50px;background:#fff;border-radius:7px 0 0 7px;box-shadow:0 1.5px 2.5px rgba(30,35,45,.38)"><svg style="left:12.5px;top:11.2px" width="26" height="26" viewBox="0 0 27 27"><path d="M8.4 1 H18.6 Q20.4 1 20.4 2.8 V8.2 Q20.4 10 18.6 10 H15.4 L13.5 12 L11.6 10 H8.4 Q6.6 10 6.6 8.2 V2.8 Q6.6 1 8.4 1Z" fill="#3584e0"/><path d="M5 2.6 Q1 2.6 1 6 V8 Q1 10.4 3.4 10.6 L4.6 12.4 L5 10.4Z" fill="#3584e0"/><path d="M22 2.6 Q26 2.6 26 6 V8 Q26 10.4 23.6 10.6 L22.4 12.4 L22 10.4Z" fill="#3584e0"/><circle cx="13.5" cy="16.4" r="3.2" fill="#3584e0"/><circle cx="4.6" cy="16.6" r="2.2" fill="#3584e0"/><circle cx="22.4" cy="16.6" r="2.2" fill="#3584e0"/><path d="M7.6 25.6 Q7.6 21 11 21 H16 Q19.4 21 19.4 25.6Z" fill="#3584e0"/><path d="M0.8 23.4 Q1.2 20.2 3.8 20.2 H6.6 Q7.4 20.2 7.2 21 L6 23.4Z" fill="#3584e0"/><path d="M26.2 23.4 Q25.8 20.2 23.2 20.2 H20.4 Q19.6 20.2 19.8 21 L21 23.4Z" fill="#3584e0"/></svg></div>
<div class="box" style="left:1866px;top:339px;width:50px;height:50px;background:#fff;border-radius:7px 0 0 7px;box-shadow:0 1.5px 2.5px rgba(30,35,45,.38)"><svg style="left:12.5px;top:11.5px" width="26" height="26" viewBox="0 0 27 27"><path d="M1.2 1 L10 2.4 V26 L1.2 23.6Z" fill="#3584e0"/><path d="M10 1.6 H16.6 V7 H15.4 V3 H10Z" fill="#3584e0"/><rect x="7" y="13" width="1.4" height="3.6" fill="#fff"/><circle cx="20.4" cy="5.2" r="2.1" fill="#3584e0"/><path d="M12.6 12.6 Q14.4 8.6 17.6 8.4 L20.2 8.6 Q21.6 8.8 22 10.4 L22.6 13.4 L24.6 14.6 L24 15.8 L21.4 14.6 L20.8 12.6 L19.6 16.2 L21.4 19.4 L21.2 24.6 H19.4 L19.2 20.2 L17.2 17.6 L15.6 21.4 L13 24.8 L11.6 23.8 L14 20.4 L16 13 L15.2 11.4 L13.8 13.4Z" fill="#3584e0"/><path d="M22 13.4 L25.8 15.6 V19.6 L22.6 19.8 L21.6 16Z" fill="#3584e0"/></svg></div>
<div class="box" style="left:1866px;top:390px;width:50px;height:50px;background:#fff;border-radius:7px 0 0 7px;box-shadow:0 1.5px 2.5px rgba(30,35,45,.38)"><svg style="left:12px;top:12px" width="27" height="27" viewBox="0 0 27 27"><circle cx="13.5" cy="13.5" r="12.5" fill="#3584e0"/><path d="M7.2 12.6 L12.4 17.6 L24.6 5.6" fill="none" stroke="#fff" stroke-width="3.4"/></svg></div>
<div class="box" style="left:1866px;top:441px;width:50px;height:50px;background:#fff;border-radius:7px 0 0 7px;box-shadow:0 1.5px 2.5px rgba(30,35,45,.38)"><svg style="left:12px;top:12px" width="32" height="32" viewBox="0 0 32 32"><circle cx="13.3" cy="13.2" r="11.6" fill="#3584e0"/><rect x="12" y="6" width="2.8" height="11" rx="1" fill="#fff"/><rect x="13" y="12" width="17.2" height="17" rx="4" fill="#dc2843"/></svg></div>
</div>
<div class="t" style="left:1895.80px;top:465.00px;font-size:13.5px;line-height:18px;color:#fff;">0</div>
</body>
</html>
